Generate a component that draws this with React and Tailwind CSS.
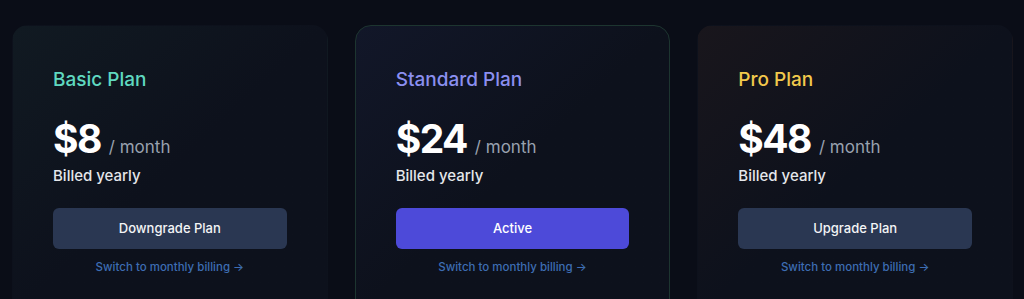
import React from 'react';

const plans = [
    {
        name: 'Basic Plan',
        price: '$8',
        titleClass: 'text-[#5fd9c0]',
        cardClass: 'border-transparent bg-gradient-to-br from-[#111a22] via-[#0d111c] to-[#0d111c]',
        button: 'Downgrade Plan',
        buttonClass: 'bg-[#2a3752] text-gray-100',
    },
    {
        name: 'Standard Plan',
        price: '$24',
        titleClass: 'text-[#8b8ff0]',
        cardClass: 'border-[#1d3530] bg-gradient-to-br from-[#121729] via-[#0d111c] to-[#0d111c]',
        button: 'Active',
        buttonClass: 'bg-[#4d4ad9] text-white',
    },
    {
        name: 'Pro Plan',
        price: '$48',
        titleClass: 'text-[#f2c94c]',
        cardClass: 'border-transparent bg-gradient-to-br from-[#19161c] via-[#0d111c] to-[#0d111c]',
        button: 'Upgrade Plan',
        buttonClass: 'bg-[#2a3752] text-gray-100',
    },
];

function PlanCard({ plan }) {
    return (
        <div className={`rounded-2xl border px-10 pt-10 pb-10 ${plan.cardClass}`}>
            <h3 className={`text-[19px] leading-7 font-medium ${plan.titleClass}`}>{plan.name}</h3>

            <div className="mt-[23px] flex items-baseline">
                <span className="text-[39px] leading-[44px] font-bold text-white tracking-[-0.04em]">{plan.price}</span>
                <span className="ml-2 text-[17px] text-gray-400">/ month</span>
            </div>
            <p className="mt-[3px] text-[15px] leading-6 font-medium text-gray-200">Billed yearly</p>

            <button className={`mt-[20px] w-full h-[41px] rounded-md text-[13px] font-medium ${plan.buttonClass}`}>
                {plan.button}
            </button>

            <div className="mt-[10px] text-center text-[11.5px] leading-4">
                <a href="#" className="font-medium text-[#3d6db3]">
                    Switch to monthly billing →
                </a>
            </div>
        </div>
    );
}

export default function App() {
    return (
        <div className="min-h-screen bg-[#0a0d17] pl-3 pr-[11px] pt-[25px] font-['Inter',sans-serif]">
            <div className="grid grid-cols-3 gap-[27px]">
                {plans.map(plan => (
                    <PlanCard key={plan.name} plan={plan} />
                ))}
            </div>
        </div>
    );
}
